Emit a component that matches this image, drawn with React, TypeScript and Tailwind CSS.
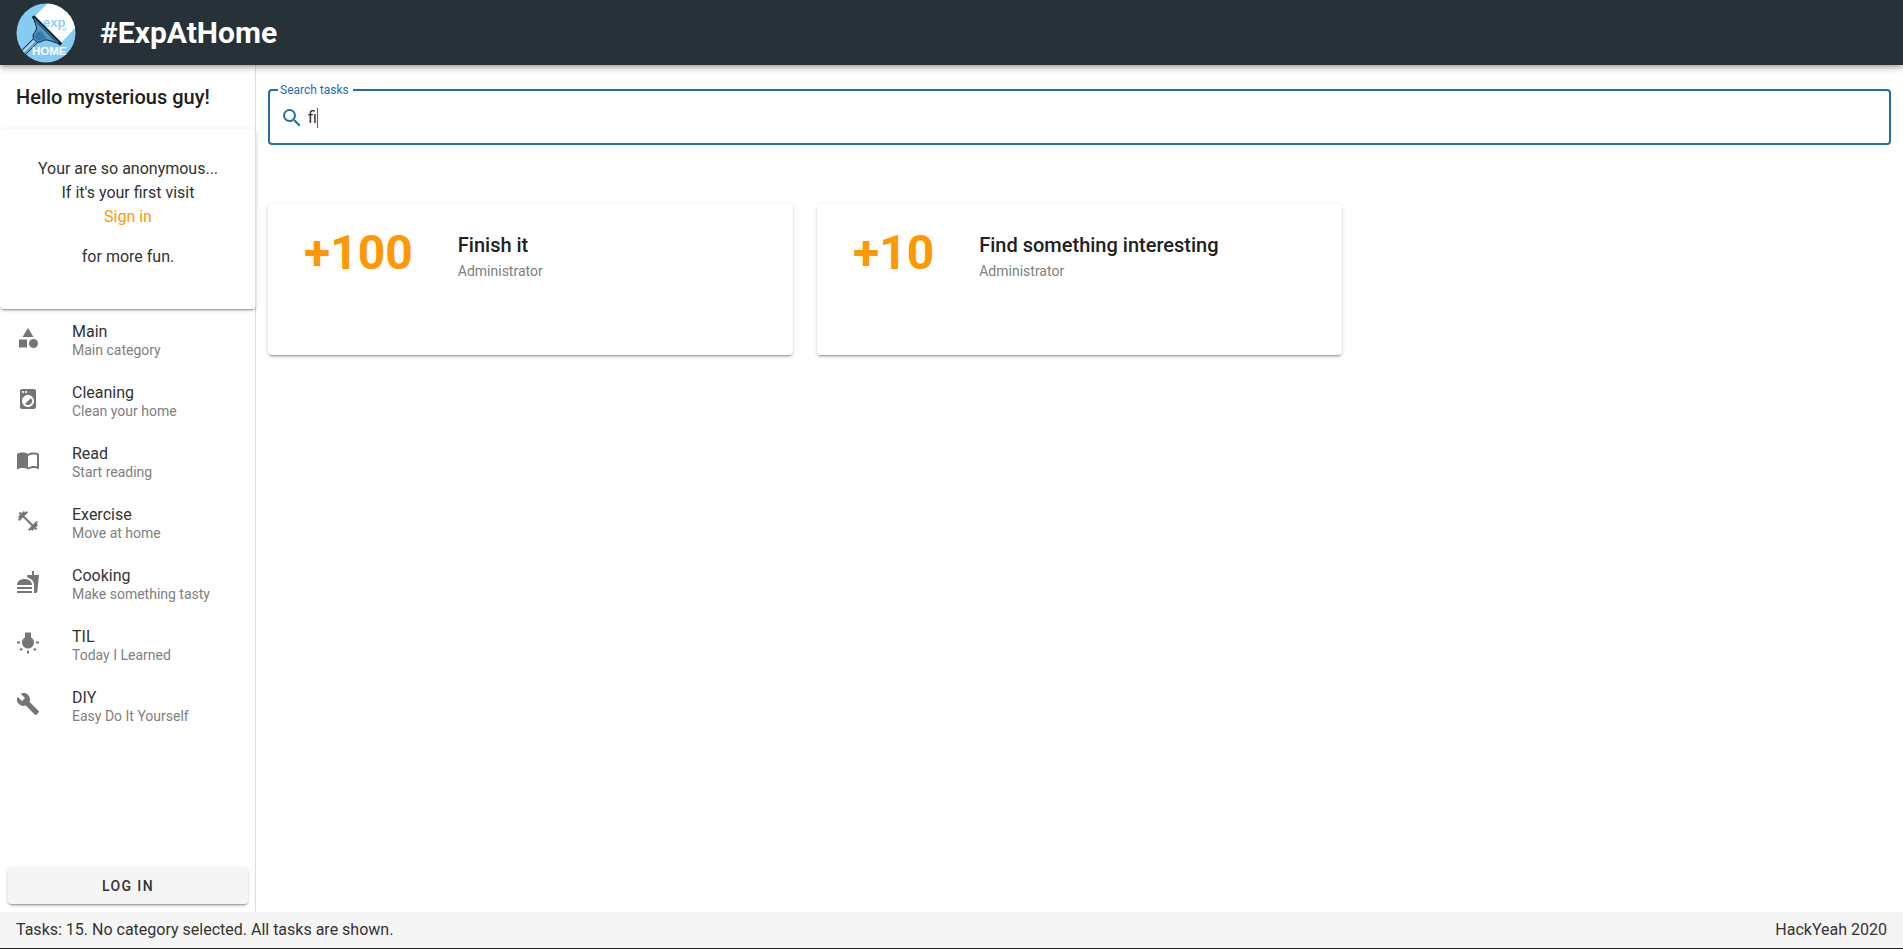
import { useState } from "react";
import type { IconType } from "react-icons";
import {
  MdBuild,
  MdCategory,
  MdFastfood,
  MdFitnessCenter,
  MdImportContacts,
  MdLocalLaundryService,
  MdSearch,
  MdWbIncandescent,
} from "react-icons/md";

const raised =
  "shadow-[0_3px_1px_-2px_rgba(0,0,0,0.2),0_2px_2px_0_rgba(0,0,0,0.14),0_1px_5px_0_rgba(0,0,0,0.12)]";

const categories: { name: string; description: string; Icon: IconType }[] = [
  { name: "Main", description: "Main category", Icon: MdCategory },
  { name: "Cleaning", description: "Clean your home", Icon: MdLocalLaundryService },
  { name: "Read", description: "Start reading", Icon: MdImportContacts },
  { name: "Exercise", description: "Move at home", Icon: MdFitnessCenter },
  { name: "Cooking", description: "Make something tasty", Icon: MdFastfood },
  { name: "TIL", description: "Today I Learned", Icon: MdWbIncandescent },
  { name: "DIY", description: "Easy Do It Yourself", Icon: MdBuild },
];

const tasks = [
  { title: "Finish it", author: "Administrator", points: 100 },
  { title: "Find something interesting", author: "Administrator", points: 10 },
];

function Logo() {
  return (
    <svg viewBox="0 0 60 60" className="size-[60px] shrink-0" role="img" aria-label="Exp at home">
      <defs>
        <clipPath id="disc">
          <circle cx="30" cy="30" r="29.5" />
        </clipPath>
      </defs>
      <g clipPath="url(#disc)">
        <rect width="60" height="60" fill="#86cbf0" />
        <path d="M19 13 34 -2H62V22L45 40Z" fill="#fff" />
        <text x="27" y="24" fontSize="13" fontFamily="Liberation Sans, sans-serif" fontWeight="700" fill="#8fd0f1">
          exp
        </text>
        <text x="46" y="28" fontSize="5" fontFamily="Liberation Sans, sans-serif" fontWeight="700" fill="#a8daf4">
          at
        </text>
        <path d="M22 35 7 50" stroke="#1d3442" strokeWidth="6.5" />
        <path d="M22 35 7 50" stroke="#74add0" strokeWidth="4.800" />
        <path d="M21.500 34.500 7 49" stroke="#c3e3f5" strokeWidth="1.500" />
        <path
          d="M17.500 14C18 19 21 23 20.500 26C20 29 17 30 17 33C17 37 21 40 24 39C27 38 28 36.500 31 37C36 38 40 40 44 41Z"
          fill="#4f9ac9"
          stroke="#14222c"
          strokeWidth="1"
        />
        <path d="M21 29 25 28 30 35 27 36.500 22 38 18 34Z" fill="#357aa6" />
        <path d="M18 14.500 44 40.500" stroke="#14222c" strokeWidth="3.600" strokeLinecap="round" />
        <path d="M18 15.500 42.500 40" stroke="#2f6c95" strokeWidth="1.600" />
        <text x="16" y="51.500" fontSize="11.500" fontFamily="Liberation Sans, sans-serif" fontWeight="700" fill="#fff">
          HOME
        </text>
      </g>
    </svg>
  );
}

function Sidebar() {
  return (
    <aside className="flex w-64 shrink-0 flex-col shadow-[inset_-1px_0_0_#dedede]">
      <h2 className="flex h-16 shrink-0 items-center px-4 text-xl font-medium text-[#212121]">
        Hello mysterious guy!
      </h2>
      <section className={`flex h-[180px] shrink-0 flex-col items-center rounded p-7 text-center ${raised}`}>
        <p>Your are so anonymous...</p>
        <p>If it's your first visit</p>
        <a href="#sign-in" className="mb-4 text-[#ff9800]">
          Sign in
        </a>
        <p>for more fun.</p>
      </section>
      <nav aria-label="Categories" className="flex-1 pt-px">
        <ul>
          {categories.map(({ name, description, Icon }) => (
            <li key={name}>
              <a href={`#${name.toLowerCase()}`} className="flex h-[61px] gap-8 px-4">
                <Icon className="mt-4 size-6 shrink-0 text-[#757575]" />
                <span className="flex flex-col pt-3">
                  <span className="leading-5">{name}</span>
                  <span className="text-sm leading-4 text-[#808080]">{description}</span>
                </span>
              </a>
            </li>
          ))}
        </ul>
      </nav>
      <div className="p-2">
        <button
          type="button"
          className={`h-9 w-full rounded bg-[#f5f5f5] text-sm font-medium tracking-widest ${raised}`}
        >
          LOG IN
        </button>
      </div>
    </aside>
  );
}

function SearchField() {
  const [query, setQuery] = useState("fi");
  return (
    <fieldset className="h-[63px] rounded border-2 border-[#2170ab] px-2">
      <legend className="px-0.5 pr-1 text-xs leading-4 text-[#2170ab]">
        <label htmlFor="search">Search tasks</label>
      </legend>
      <label htmlFor="search" className="flex cursor-text items-center pt-2 pl-0.5">
        <MdSearch className="mr-1 size-6 text-[#2170ab]" />
        <input
          id="search"
          value={query}
          onChange={(event) => setQuery(event.target.value)}
          className="field-sizing-content min-w-0 caret-transparent outline-none"
        />
        <span className="h-5 w-px bg-[#2170ab]" />
      </label>
    </fieldset>
  );
}

export default function App() {
  return (
    <div className="flex min-h-screen flex-col bg-white font-[Roboto,sans-serif] text-base leading-6 text-[#333]">
      <header className="z-10 flex h-[65px] items-center gap-6 bg-[#263238] px-4 text-white shadow-[0_2px_4px_-1px_rgba(0,0,0,0.2),0_4px_5px_0_rgba(0,0,0,0.14),0_1px_10px_0_rgba(0,0,0,0.12)]">
        <Logo />
        <h1 className="text-3xl font-bold">#ExpAtHome</h1>
      </header>
      <div className="flex flex-1">
        <Sidebar />
        <main className="flex min-w-0 flex-1 flex-col gap-[59px] px-3 pt-[17px] pb-4">
          <SearchField />
          <div className="grid grid-cols-3 gap-6">
            {tasks.map((task) => (
              <article key={task.title} className={`flex h-[151px] gap-[45px] rounded px-9 pt-[25px] ${raised}`}>
                <strong className="text-5xl font-bold text-[#ff9800]">+{task.points}</strong>
                <div className="pt-1">
                  <h3 className="text-xl leading-6 font-medium text-[#212121]">{task.title}</h3>
                  <p className="mt-1 text-sm text-[#808080]">{task.author}</p>
                </div>
              </article>
            ))}
          </div>
        </main>
      </div>
      <footer className="flex h-[37px] items-center justify-between border-b border-[#212121] bg-[#f5f5f5] px-4">
        <span>Tasks: 15. No category selected. All tasks are shown.</span>
        <span>HackYeah 2020</span>
      </footer>
    </div>
  );
}
